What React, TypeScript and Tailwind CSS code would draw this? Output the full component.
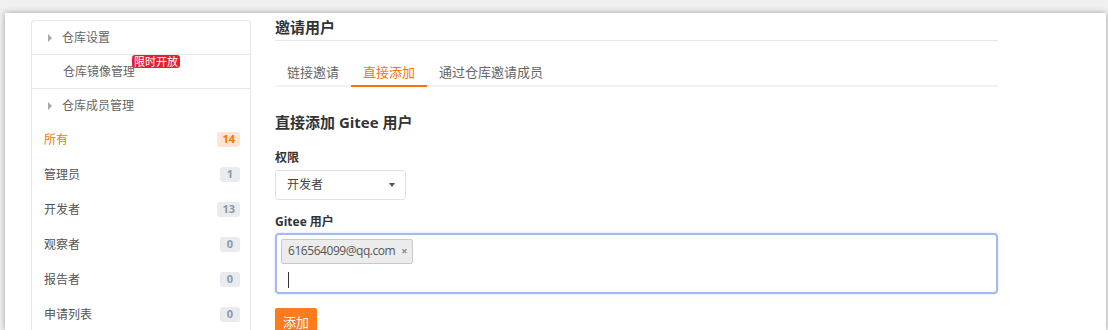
const roles = [
  { name: '所有', count: 14, active: true },
  { name: '管理员', count: 1 },
  { name: '开发者', count: 13 },
  { name: '观察者', count: 0 },
  { name: '报告者', count: 0 },
  { name: '申请列表', count: 0 },
]

const tabs = ['链接邀请', '直接添加', '通过仓库邀请成员']

function Caret() {
  return <span className="mr-[10px] inline-block h-0 w-0 border-y-[4px] border-l-[4px] border-y-transparent border-l-[#a8a8a8]" />
}

function Sidebar() {
  return (
    <aside className="w-[220px] shrink-0 rounded-t-[4px] border border-b-0 border-[#e3e8ec] text-[12px]">
      <div className="flex h-[34px] items-center border-b border-[#e3e8ec] pl-[16px] text-[#666]">
        <Caret />
        仓库设置
      </div>
      <div className="flex h-[34px] items-center border-b border-[#e3e8ec] pl-[31px] text-[#666]">
        <span className="relative">
          仓库镜像管理
          <span className="absolute left-full top-[-8px] -ml-[3px] whitespace-nowrap rounded-[3px] bg-[#e3212f] px-[2px] text-[11px] leading-[13px] text-white">
            限时开放
          </span>
        </span>
      </div>
      <div className="flex h-[33px] items-center pl-[16px] text-[#666]">
        <Caret />
        仓库成员管理
      </div>
      {roles.map((r) => (
        <div key={r.name} className="flex h-[35px] items-center justify-between pl-[12px] pr-[10px]">
          <span className={r.active ? 'text-[#fe7300]' : 'text-[#555]'}>{r.name}</span>
          <span
            className={
              'flex h-[15px] min-w-[20px] items-center justify-center rounded-[3px] px-[5px] text-[11px] font-bold ' +
              (r.active ? 'bg-[#ffe3d4] text-[#fe7300]' : 'bg-[#e9ebee] text-[#8e98aa]')
            }
          >
            {r.count}
          </span>
        </div>
      ))}
    </aside>
  )
}

export default function App() {
  return (
    <div
      className="flex h-[330px] w-[1108px] overflow-hidden bg-[#f0f0f0] pl-[5px] pr-[2px] pt-[13px]"
      style={{ fontFamily: '"Open Sans", "Noto Sans CJK SC", sans-serif' }}
    >
      <div className="flex flex-1 gap-[24px] bg-white pl-[26px] pt-[7px] shadow-[0_0_6px_rgba(0,0,0,0.35)]">
        <Sidebar />

        <main className="-mt-[7px] w-[723px] shrink-0">
          <div className="border-b border-[#e6e6e6] pb-[4px] pt-[6px] text-[15px] font-bold leading-[17px] text-[#333]">
            邀请用户
          </div>

          <div className="mt-[17px] flex border-b-2 border-[#f0f2f5] text-[13px]">
            {tabs.map((t, i) => (
              <div
                key={t}
                className={
                  'px-[12px] pb-[3px] pt-[4px] leading-[20px] ' +
                  (i === 1 ? '-mb-[2px] border-b-2 border-[#fe7300] text-[#fe7300]' : 'text-[#666]')
                }
              >
                {t}
              </div>
            ))}
          </div>

          <div className="mt-[25px] text-[15px] font-bold leading-[20px] text-[#333]">直接添加 Gitee 用户</div>

          <div className="mt-[18px] text-[12px] font-semibold leading-[16px] text-[#333]">权限</div>
          <div className="mt-[4px] flex h-[30px] w-[131px] items-center justify-between rounded-[3px] border border-[#dfe3e8] pl-[11px] pr-[10px] text-[12px] text-[#444]">
            开发者
            <span className="h-0 w-0 border-x-[3px] border-t-[4px] border-x-transparent border-t-[#555]" />
          </div>

          <div className="mt-[14px] text-[12px] font-bold leading-[16px] text-[#333]">Gitee 用户</div>
          <div className="mt-[3px] h-[61px] rounded-[4px] border-2 border-[#a3b8f4] px-[4px] pt-[2px] shadow-[0_0_3px_rgba(120,150,230,0.3)]">
            <div className="inline-flex h-[25px] items-center gap-[6px] rounded-[2px] border border-[#c9c9c9] bg-[#ececec] pl-[6px] pr-[5px] text-[12px] tracking-[-0.45px] text-[#555]">
              616564099@qq.com
              <span className="text-[11px] font-bold text-[#888]">×</span>
            </div>
            <div className="ml-[7px] mt-[8px] h-[16px] w-px bg-[#333]" />
          </div>

          <button className="mt-[14px] h-[30px] rounded-[2px] bg-[#fe7a1e] px-[8px] text-[13px] text-white">添加</button>
        </main>
      </div>
    </div>
  )
}
